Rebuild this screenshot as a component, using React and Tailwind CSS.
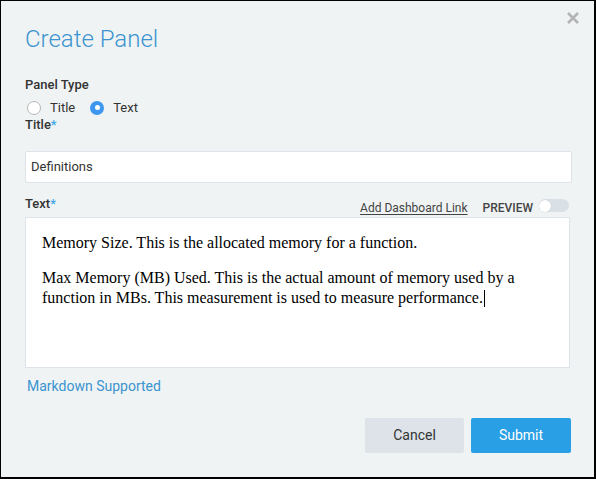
import { useState } from 'react';

const fieldLabel = 'text-[13px] font-medium leading-none text-[#333]';

function Radio({ checked, label }) {
  return (
    <label className="flex items-center gap-[9px] text-[13px] text-[#333]">
      {checked ? (
        <span className="flex h-[14px] w-[14px] items-center justify-center rounded-full bg-[#3d97ee]">
          <span className="h-[5px] w-[5px] rounded-full bg-white" />
        </span>
      ) : (
        <span className="h-[14px] w-[14px] rounded-full border border-[#b5b5b5] bg-white" />
      )}
      {label}
    </label>
  );
}

export default function App() {
  const [panelType] = useState('text');

  return (
    <div className="relative h-[479px] w-[596px] border-t border-l border-r-2 border-b-2 border-black bg-[#eff3f4] font-['Roboto',sans-serif]">
      <button className="absolute right-[14px] top-[10px] text-[#b4b4b4]">
        <svg width="14" height="14" viewBox="0 0 14 14">
          <path d="M2 2 L12 12 M12 2 L2 12" stroke="currentColor" strokeWidth="2.6" />
        </svg>
      </button>

      <div className="px-[24px] pt-[24px]">
        <h1 className="text-[24px] font-light leading-[28px] text-[#3b93cf]">Create Panel</h1>

        <p className={`mt-[25px] ${fieldLabel}`}>Panel Type</p>
        <div className="mt-[7px] flex items-center gap-[15px] pl-[2px]">
          <Radio checked={panelType === 'title'} label="Title" />
          <Radio checked={panelType === 'text'} label="Text" />
        </div>

        <p className={`mt-0 ${fieldLabel}`}>
          Title<span className="text-[#3da5e8]">*</span>
        </p>
        <div className="mt-[20px] flex h-[32px] w-[547px] items-center rounded-[2px] border border-[#dde3e8] bg-white px-[5px] text-[13px] text-[#333]">
          Definitions
        </div>

        <div className="mt-[14px] flex w-[544px] items-end justify-between">
          <p className={`mb-[7px] ${fieldLabel}`}>
            Text<span className="text-[#3da5e8]">*</span>
          </p>
          <div className="flex items-center">
            <a className="text-[12px] leading-[18px] text-[#444] underline underline-offset-2">Add Dashboard Link</a>
            <span className="ml-[15px] text-[12px] font-medium leading-[18px] text-[#444]">PREVIEW</span>
            <span className="ml-[6px] flex h-[13px] w-[30px] -translate-y-[2px] items-center rounded-full bg-[#d9e0e6]">
              <span className="h-[12px] w-[12px] rounded-full bg-white shadow-[0_0_1px_rgba(0,0,0,0.2)]" />
            </span>
          </div>
        </div>
        <div className="h-[151px] w-[545px] border border-[#dde3e8] bg-white px-[16px] pt-[15px] font-['Liberation_Serif',serif] text-[16px] leading-[20px] text-black">
          <p>Memory Size. This is the allocated memory for a function.</p>
          <p className="mt-[15px]">
            Max Memory (MB) Used. This is the actual amount of memory used by a function in MBs. This measurement is used to
            measure performance.<span className="ml-px inline-block h-[17px] w-px align-[-4px] bg-black" />
          </p>
        </div>

        <p className="mt-[8px] pl-[2px] text-[14px] text-[#3b93cf]">Markdown Supported</p>

        <div className="mt-[21px] flex w-[546px] justify-end gap-[7px]">
          <button className="h-[35px] w-[99px] rounded-[2px] bg-[#dde3e9] text-[14px] text-[#333]">Cancel</button>
          <button className="h-[35px] w-[100px] rounded-[2px] bg-[#29a0e5] text-[14px] text-white">Submit</button>
        </div>
      </div>
    </div>
  );
}
